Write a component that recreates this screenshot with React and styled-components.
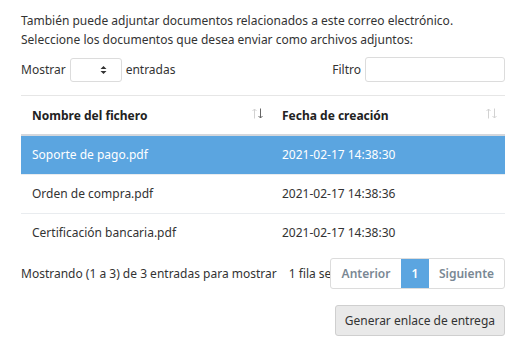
import React from 'react'
import styled, {createGlobalStyle} from 'styled-components'

const Global = createGlobalStyle`
body{
	margin:0;
	background:#fff;
	font-family:"Noto Sans","Open Sans",sans-serif;
	font-size:12px;
	color:#333;
}
`

const rows = [
	{name:'Soporte de pago.pdf', date:'2021-02-17 14:38:30', selected:true},
	{name:'Orden de compra.pdf', date:'2021-02-17 14:38:36'},
	{name:'Certificación bancaria.pdf', date:'2021-02-17 14:38:30'},
]

const SortIcon = ({down}) => (
	<Sort>
		<svg width="11" height="11" viewBox="0 0 11 11" fill="none" strokeWidth="1">
			<path d="M2.5 10.5 V1 M0.5 3 L2.5 1 L4.5 3" stroke="#d2d2d2"/>
			<path d="M8.5 0.5 V10 M6.5 8 L8.5 10 L10.5 8" stroke={down ? '#666' : '#d2d2d2'}/>
		</svg>
	</Sort>
)

export default function App(){
	return(
		<Page>
			<Global/>
			<Intro>
				También puede adjuntar documentos relacionados a este correo electrónico.<br/>
				Seleccione los documentos que desea enviar como archivos adjuntos:
			</Intro>
			<Controls>
				<Label>
					Mostrar
					<Select>
						<Arrows>
							<svg width="7" height="10" viewBox="0 0 7 10">
								<path d="M0.5 4 L3.5 1 L6.5 4 Z M0.5 6 L3.5 9 L6.5 6 Z" fill="#333"/>
							</svg>
						</Arrows>
					</Select>
					entradas
				</Label>
				<Label>
					Filtro
					<Input/>
				</Label>
			</Controls>
			<Table>
				<thead>
					<tr>
						<Th>Nombre del fichero<SortIcon down/></Th>
						<Th>Fecha de creación<SortIcon/></Th>
					</tr>
				</thead>
				<tbody>
					{rows.map((r,i)=>(
						<Tr key={i} selected={r.selected} last={i===rows.length-1}>
							<Td>{r.name}</Td>
							<Td>{r.date}</Td>
						</Tr>
					))}
				</tbody>
			</Table>
			<Footer>
				<Info>Mostrando (1 a 3) de 3 entradas para mostrar</Info>
				<Sel>1 fila seleccionada</Sel>
				<Pager>
					<PageBtn w={70}>Anterior</PageBtn>
					<PageBtn w={28} active>1</PageBtn>
					<PageBtn w={75}>Siguiente</PageBtn>
				</Pager>
			</Footer>
			<Actions>
				<Button>Generar enlace de entrega</Button>
			</Actions>
		</Page>
	)
}

const Page = styled.div`
	width:484px;
	padding:11px 8px 0 21px;
`
const Intro = styled.p`
	margin:0;
	line-height:19px;
`
const Controls = styled.div`
	display:flex;
	justify-content:space-between;
	align-items:center;
	margin-top:8px;
`
const Label = styled.label`
	display:flex;
	align-items:center;
	gap:4px;
`
const Select = styled.div`
	position:relative;
	width:52px;
	height:24px;
	border:1px solid #dcdcdc;
	border-radius:3px;
	box-sizing:border-box;
`
const Arrows = styled.span`
	position:absolute;
	right:14px;
	top:6px;
	line-height:0;
`
const Input = styled.div`
	width:140px;
	height:25px;
	border:1px solid #dcdcdc;
	border-radius:3px;
	box-sizing:border-box;
`
const Table = styled.table`
	width:100%;
	border-collapse:collapse;
	margin-top:13px;
	border-top:1px solid #e6e6e6;
`
const Th = styled.th`
	position:relative;
	text-align:left;
	font-weight:bold;
	height:38px;
	padding:0 11px;
	border-bottom:2px solid #d4d7dc;
	color:#222;
	&:first-child{width:228px;}
`
const Sort = styled.span`
	position:absolute;
	right:8px;
	top:12px;
	line-height:0;
`
const Tr = styled.tr`
	height:39px;
	background:${p=>p.selected ? '#5ba5e0' : 'transparent'};
	color:${p=>p.selected ? '#fff' : '#333'};
	border-bottom:${p=>p.last ? 'none' : '1px solid #e9ecef'};
`
const Td = styled.td`
	padding:0 11px;
`
const Footer = styled.div`
	display:flex;
	align-items:center;
	margin-top:6px;
	white-space:nowrap;
`
const Info = styled.div`
	flex-shrink:0;
`
const Sel = styled.div`
	flex:1;
	min-width:0;
	overflow:hidden;
	margin-left:12px;
`
const Pager = styled.div`
	display:flex;
	border:1px solid #dcdcdc;
	border-radius:3px;
	height:31px;
	box-sizing:border-box;
	flex-shrink:0;
`
const PageBtn = styled.div`
	display:flex;
	align-items:center;
	justify-content:center;
	width:${p=>p.w}px;
	font-weight:600;
	color:${p=>p.active ? '#fff' : '#7a8894'};
	background:${p=>p.active ? '#5ba5e0' : 'transparent'};
`
const Actions = styled.div`
	display:flex;
	justify-content:flex-end;
	margin-top:16px;
`
const Button = styled.button`
	font-family:inherit;
	font-size:12px;
	color:#333;
	background:#e9e9e9;
	border:1px solid #cfcfcf;
	border-radius:3px;
	height:31px;
	padding:0 9px;
`
